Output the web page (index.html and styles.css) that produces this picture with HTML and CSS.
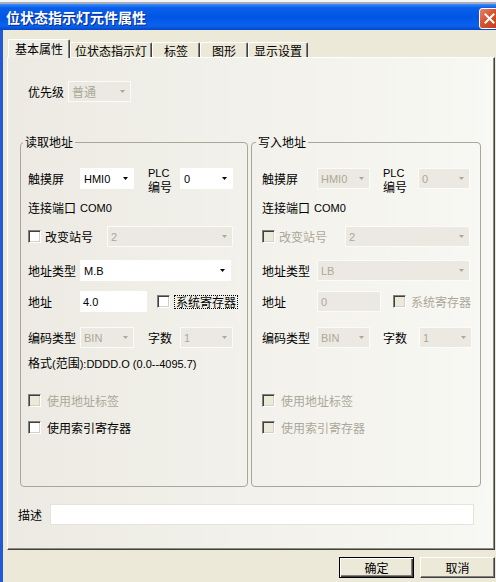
FILE: index.html
```html
<!DOCTYPE html>
<html lang="zh-CN">
<head>
<meta charset="utf-8">
<title>位状态指示灯元件属性</title>
<link rel="stylesheet" href="styles.css">
</head>
<body>
<div class="topstrip"></div>
<div class="titlebar">
  <span class="title">位状态指示灯元件属性</span>
  <span class="close"><svg width="11" height="11" viewBox="0 0 11 11"><path d="M1.5 1.5L9.5 9.5M9.5 1.5L1.5 9.5" stroke="#fff" stroke-width="2" stroke-linecap="square"/></svg></span>
</div>
<div class="frame">
  <div class="tabs">
    <div class="tab active t1">基本属性</div>
    <div class="tab t2">位状态指示灯</div>
    <div class="tab t3">标签</div>
    <div class="tab t4">图形</div>
    <div class="tab t5">显示设置</div>
  </div>
  <div class="panel">
    <div class="prio">
      <span class="plabel">优先级</span>
      <div class="combo dis w63"><span>普通</span><span class="arr"><svg width="5" height="3" viewBox="0 0 5 3"><path d="M0 0H5L2.5 3Z"/></svg></span></div>
    </div>
    <div class="groups">
      <fieldset class="group gl">
        <legend>读取地址</legend>
        <div class="r r1">
          <span class="lbl lw52">触摸屏</span>
          <div class="combo w54"><span class="lat">HMI0</span><span class="arr"><svg width="5" height="3" viewBox="0 0 5 3"><path d="M0 0H5L2.5 3Z"/></svg></span></div>
          <span class="plc pl14 pw32"><span class="lat">PLC</span><br>编号</span>
          <div class="combo w53"><span class="lat">0</span><span class="arr"><svg width="5" height="3" viewBox="0 0 5 3"><path d="M0 0H5L2.5 3Z"/></svg></span></div>
        </div>
        <div class="r r2"><span>连接端口</span><span class="lat sp">COM0</span></div>
        <div class="r r3">
          <span class="cb"></span><span class="cbl g4 cw62">改变站号</span>
          <div class="combo dis w126"><span class="lat">2</span><span class="arr"><svg width="5" height="3" viewBox="0 0 5 3"><path d="M0 0H5L2.5 3Z"/></svg></span></div>
        </div>
        <div class="r r4">
          <span class="lbl lw52">地址类型</span>
          <div class="combo w151"><span class="lat">M.B</span><span class="arr"><svg width="5" height="3" viewBox="0 0 5 3"><path d="M0 0H5L2.5 3Z"/></svg></span></div>
        </div>
        <div class="r r5">
          <span class="lbl lw52">地址</span>
          <div class="input w67"><span class="lat">4.0</span></div>
          <span class="cb ml10"></span><span class="focus g4">系统寄存器</span>
        </div>
        <div class="r r6">
          <span class="lbl lw52">编码类型</span>
          <div class="combo dis w54"><span class="lat">BIN</span><span class="arr"><svg width="5" height="3" viewBox="0 0 5 3"><path d="M0 0H5L2.5 3Z"/></svg></span></div>
          <span class="lbl pl14 pw32">字数</span>
          <div class="combo dis w53"><span class="lat">1</span><span class="arr"><svg width="5" height="3" viewBox="0 0 5 3"><path d="M0 0H5L2.5 3Z"/></svg></span></div>
        </div>
        <div class="r r7"><span>格式<span class="lat">(</span>范围<span class="lat">):DDDD.O (0.0--4095.7)</span></span></div>
        <div class="r r8"><span class="cb dis"></span><span class="cbl g6 off">使用地址标签</span></div>
        <div class="r r9"><span class="cb"></span><span class="cbl g6">使用索引寄存器</span></div>
      </fieldset>
      <fieldset class="group gr">
        <legend>写入地址</legend>
        <div class="r r1">
          <span class="lbl lw55">触摸屏</span>
          <div class="combo dis w53"><span class="lat">HMI0</span><span class="arr"><svg width="5" height="3" viewBox="0 0 5 3"><path d="M0 0H5L2.5 3Z"/></svg></span></div>
          <span class="plc pl13 pw35"><span class="lat">PLC</span><br>编号</span>
          <div class="combo dis w52"><span class="lat">0</span><span class="arr"><svg width="5" height="3" viewBox="0 0 5 3"><path d="M0 0H5L2.5 3Z"/></svg></span></div>
        </div>
        <div class="r r2"><span>连接端口</span><span class="lat sp">COM0</span></div>
        <div class="r r3">
          <span class="cb dis"></span><span class="cbl g4 cw66 off">改变站号</span>
          <div class="combo dis w125"><span class="lat">2</span><span class="arr"><svg width="5" height="3" viewBox="0 0 5 3"><path d="M0 0H5L2.5 3Z"/></svg></span></div>
        </div>
        <div class="r r4">
          <span class="lbl lw55">地址类型</span>
          <div class="combo dis w153"><span class="lat">LB</span><span class="arr"><svg width="5" height="3" viewBox="0 0 5 3"><path d="M0 0H5L2.5 3Z"/></svg></span></div>
        </div>
        <div class="r r5">
          <span class="lbl lw55">地址</span>
          <div class="input dis w64"><span class="lat">0</span></div>
          <span class="cb dis ml12"></span><span class="cbl g5 off">系统寄存器</span>
        </div>
        <div class="r r6">
          <span class="lbl lw55">编码类型</span>
          <div class="combo dis w53"><span class="lat">BIN</span><span class="arr"><svg width="5" height="3" viewBox="0 0 5 3"><path d="M0 0H5L2.5 3Z"/></svg></span></div>
          <span class="lbl pl13 pw36">字数</span>
          <div class="combo dis w53"><span class="lat">1</span><span class="arr"><svg width="5" height="3" viewBox="0 0 5 3"><path d="M0 0H5L2.5 3Z"/></svg></span></div>
        </div>
        <div class="r r7"></div>
        <div class="r r8"><span class="cb dis"></span><span class="cbl g6 off">使用地址标签</span></div>
        <div class="r r9"><span class="cb dis"></span><span class="cbl g6 off">使用索引寄存器</span></div>
      </fieldset>
    </div>
    <div class="desc">
      <span class="dlabel">描述</span>
      <div class="dinput"></div>
    </div>
  </div>
  <div class="buttons">
    <div class="btn default">确定</div>
    <div class="btn">取消</div>
  </div>
</div>
</body>
</html>
```
FILE: styles.css
```css
* { box-sizing: border-box; }
html, body { margin: 0; padding: 0; }
body {
  width: 496px;
  height: 582px;
  overflow: hidden;
  background: #ECE9D8;
  font-family: "Noto Sans CJK SC", sans-serif;
  font-size: 12px;
  line-height: 14px;
  color: #000;
}
.lat { font-family: "Liberation Sans", "Noto Sans CJK SC", sans-serif; font-size: 11px; }

.topstrip {
  height: 4px;
  background: linear-gradient(#F4F4F4 0, #F4F4F4 50%, #A9AEBE 50%, #A9AEBE 100%);
}
.titlebar {
  height: 26px;
  display: flex;
  align-items: center;
  padding-left: 6px;
  background: linear-gradient(#3D8EF6 0, #0B5FEA 14%, #0056E4 50%, #0C62EE 84%, #0347C8 100%);
}
.title {
  color: #fff;
  font-weight: bold;
  font-size: 14px;
  line-height: 16px;
  text-shadow: 1px 1px 0 #0A2A8A;
}
.close {
  margin-left: auto;
  margin-right: -4px;
  align-self: flex-end;
  margin-bottom: 1px;
  width: 21px;
  height: 21px;
  border: 1px solid #fff;
  border-radius: 3px;
  background: linear-gradient(135deg, #E8826A 0, #D6522F 45%, #C23C18 100%);
  display: flex;
  align-items: center;
  justify-content: center;
}

.frame {
  border-left: 3px solid #2358D6;
  height: 552px;
  padding-top: 9px;
}
.tabs {
  display: flex;
  align-items: flex-end;
  height: 18px;
  margin-left: 5px;
  position: relative;
  z-index: 1;
}
.tab {
  height: 15px;
  display: flex;
  align-items: center;
  justify-content: center;
  background: #ECE9D8;
  border-top: 1px solid #fff;
  border-left: 1px solid #fff;
  border-right: 1px solid #404040;
  box-shadow: inset -1px 0 #808080;
  border-radius: 2px 2px 0 0;
  padding-top: 1px;
}
.tab.active {
  height: 19px;
  margin-bottom: -1px;
  background: #EEEDE6;
  padding-top: 0;
}
.t1 { width: 62px; }
.t2 { width: 82px; }
.t3 { width: 48px; }
.t4 { width: 48px; }
.t5 { width: 60px; }

.panel {
  margin-left: 4px;
  width: 488px;
  height: 493px;
  border: 1px solid;
  border-color: #fff #404040 #404040 #fff;
  box-shadow: inset -1px -1px #8E8D82;
  background: linear-gradient(to right, #ECEAE2 0, #F8F8F4 100%);
  padding-top: 23px;
}
.prio {
  display: flex;
  align-items: center;
  height: 21px;
  padding-left: 20px;
}
.plabel { width: 40px; }

.groups {
  display: flex;
  gap: 3px;
  margin-top: 33px;
  padding-left: 12px;
}
.group {
  margin: 0;
  min-width: 0;
  border: 1px solid #A8A79A;
  border-radius: 4px;
  padding: 19px 7px 48px;
}
.gl { width: 228px; }
.gr { width: 230px; padding-left: 10px; padding-right: 10px; }
.group legend {
  padding: 0 2px;
  margin-left: -5px;
  line-height: 14px;
}
.gr legend { margin-left: -6px; }

.r { display: flex; align-items: center; height: 21px; white-space: nowrap; }
.r2 { margin-top: 8px; }
.r3 { margin-top: 8px; }
.r4 { margin-top: 13px; }
.r5 { margin-top: 10px; }
.r6 { margin-top: 15px; }
.r7 { margin-top: 5px; }
.r8 { margin-top: 16px; }
.r9 { margin-top: 6px; }

.lbl { flex: none; }
.lw52 { width: 52px; }
.lw55 { width: 55px; }
.pl13 { margin-left: 13px; }
.pl14 { margin-left: 14px; }
.pw32 { width: 32px; }
.pw35 { width: 35px; }
.pw36 { width: 36px; }
.plc { line-height: 13px; flex: none; }
.sp { margin-left: 4px; }

.combo {
  flex: none;
  height: 21px;
  display: flex;
  align-items: center;
  padding-left: 3px;
  background: #fff;
  border: 1px solid #fff;
}
.combo .arr {
  margin-left: auto;
  width: 15px;
  display: flex;
  align-items: center;
  justify-content: center;
}
.combo .arr svg { fill: #000; }
.combo.dis {
  background: #EBE9E1;
  border: 1px solid #FBFBF8;
  color: #ACA899;
}
.combo.dis .arr svg { fill: #ACA899; }
.w52 { width: 52px; }
.w53 { width: 53px; }
.w54 { width: 54px; }
.w63 { width: 63px; }
.w64 { width: 64px; }
.w67 { width: 67px; }
.w125 { width: 125px; }
.w126 { width: 126px; }
.w151 { width: 151px; }
.w153 { width: 153px; }

.input {
  flex: none;
  height: 21px;
  display: flex;
  align-items: center;
  padding-left: 3px;
  background: #fff;
}
.input.dis {
  background: #EBE9E1;
  border: 1px solid #FBFBF8;
  color: #ACA899;
}

.cb {
  flex: none;
  width: 13px;
  height: 13px;
  background: #fff;
  border: 1px solid;
  border-color: #808080 #fff #fff #808080;
  box-shadow: inset 1px 1px #404040, inset -1px -1px #D4D0C8;
}
.cb.dis { background: #ECE9D8; }
.ml10 { margin-left: 10px; }
.ml12 { margin-left: 12px; }
.cbl { flex: none; }
.g4 { margin-left: 4px; }
.g5 { margin-left: 5px; }
.g6 { margin-left: 6px; }
.cw62 { width: 62px; }
.cw66 { width: 66px; }
.off { color: #ACA899; }
.focus {
  border: 1px dotted #000;
  padding: 0 1px;
  line-height: 12px;
}

.desc {
  display: flex;
  align-items: center;
  margin-top: 17px;
  padding-left: 10px;
}
.dlabel { width: 32px; }
.dinput {
  width: 424px;
  height: 21px;
  background: #fff;
  border: 1px solid #E6E4DA;
}

.buttons {
  display: flex;
  justify-content: flex-end;
  gap: 6px;
  margin-top: 7px;
  padding-right: 1px;
}
.btn {
  width: 75px;
  height: 21px;
  display: flex;
  align-items: center;
  justify-content: center;
  background: #ECE9D8;
  border: 1px solid;
  border-color: #fff #404040 #404040 #fff;
  box-shadow: inset -1px -1px #808080;
}
.btn.default {
  border-color: #000;
  box-shadow: inset 1px 1px #fff, inset -1px -1px #404040, inset -2px -2px #808080;
}
```
